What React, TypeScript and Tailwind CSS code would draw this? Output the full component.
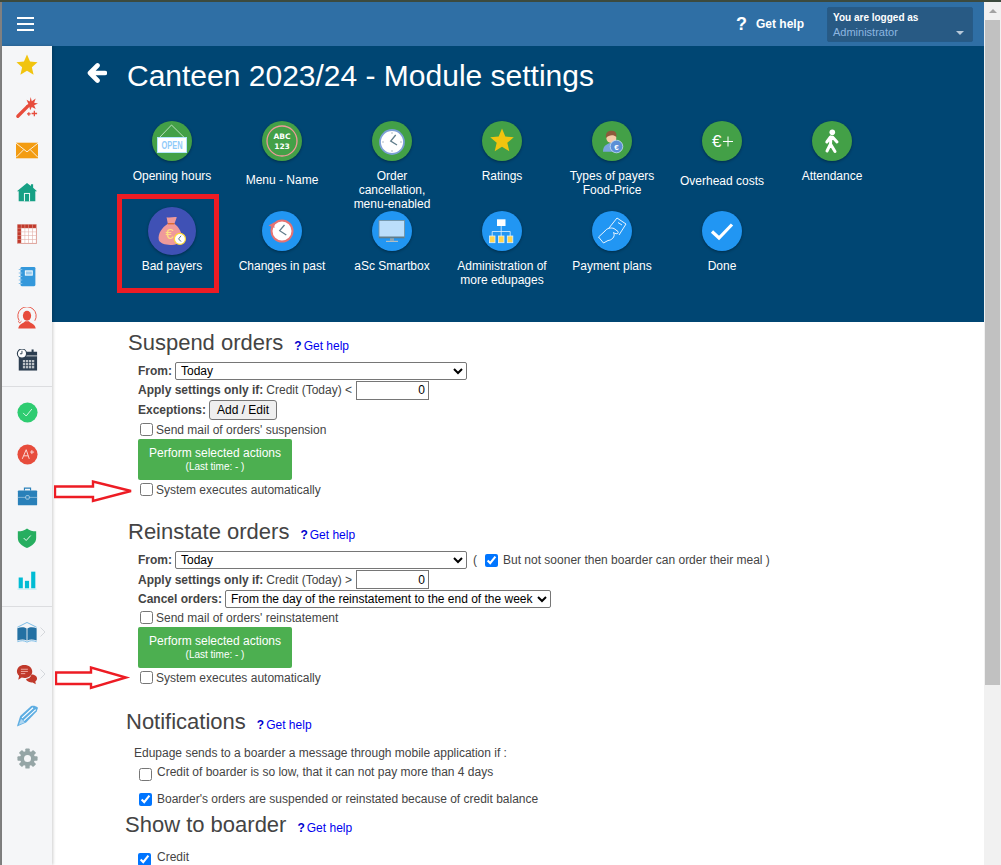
import React from 'react';

const Star = () => (
  <svg viewBox="0 0 24 24" className="w-[24px] h-[22px] -mt-[2px]"><polygon points="12,0.5 15.3,8.2 23.5,8.9 17.3,14.4 19.2,22.5 12,18.2 4.8,22.5 6.7,14.4 0.5,8.9 8.7,8.2" fill="#f1c40f" /></svg>
);
const Wand = () => (
  <svg viewBox="0 0 24 24" className="w-[24px] h-[22px]">
    <path d="M2 21 L13 10" stroke="#e74c3c" strokeWidth="3.6" strokeLinecap="round" />
    <polygon points="16,0 17.2,4.500 21.500,1.500 19.800,6.200 24,7.200 19.800,9 21.500,13 17.200,11 15.500,14.500 14.500,10.500 10.500,10 13.500,7.500 11.500,3 15,5" fill="#e74c3c" />
    <path d="M20 15v6M17 18h6M14 16.500v4M12 18.500h4" stroke="#e74c3c" strokeWidth="1.400" />
  </svg>
);
const Mail = () => (
  <svg viewBox="0 0 24 18" className="w-[22px] h-[17px]">
    <rect width="24" height="17" y="0.5" fill="#f39c12" />
    <path d="M0 1 L12 10.500 L24 1 M0 16.500 L8.500 8 M24 16.500 L15.500 8" stroke="#fff" strokeWidth="0.9" fill="none" />
  </svg>
);
const Home = () => (
  <svg viewBox="0 0 24 24" className="w-[22px] h-[21px]">
    <path d="M12 1 L16.500 4.500 V2.500 H19 V6.500 L23.500 10.500 H21.500 V22 H2.500 V10.500 H0.500 Z" fill="#16a085" />
    <path d="M8.500 22 V12.500 H15.500 V22" fill="#e8f6f3" />
    <rect x="9.700" y="13.700" width="4.600" height="8.300" fill="#16a085" />
  </svg>
);
const Timetable = () => {
  const cells: React.ReactNode[] = [];
  for (let r = 0; r < 5; r++) {
    for (let c = 0; c < 5; c++) {
      const dark = r === 0 || c === 0;
      cells.push(<rect key={`${r}-${c}`} x={0.800 + c * 4.500} y={0.800 + r * 4.500} width="3.900" height="3.900" fill={dark ? '#c0392b' : '#fff'} />);
    }
  }
  return (
    <svg viewBox="0 0 24 24" className="w-[20px] h-[20px]"><rect width="24" height="24" fill="#e0a9a2" rx="1" />{cells}</svg>
  );
};
const Notebook = () => (
  <svg viewBox="0 0 24 24" className="w-[21px] h-[21px]">
    <rect x="4" y="1" width="17" height="22" rx="1.500" fill="#3498db" />
    <rect x="9" y="5" width="9" height="6" fill="#fff" />
    <path d="M10 7h7M10 9h7" stroke="#3498db" strokeWidth="0.9" />
    <path d="M2 4h4M2 8h4M2 12h4M2 16h4M2 20h4" stroke="#85c1e9" strokeWidth="1.200" />
  </svg>
);
const UserIcon = () => (
  <svg viewBox="0 0 24 24" className="w-[22px] h-[22px]">
    <path d="M3.500 15 A10 10 0 1 1 20.500 15" stroke="#e74c3c" strokeWidth="1" fill="none" />
    <ellipse cx="12" cy="9.500" rx="4.500" ry="5.500" fill="#e74c3c" />
    <path d="M2.500 23.500 C3 18 8 18 10 15.500 H14 C16 18 21 18 21.500 23.500 Z" fill="#e74c3c" />
    <path d="M2.500 15.500 L4 17.500 L6 15.500" stroke="#e74c3c" strokeWidth="1" fill="none" />
  </svg>
);
const CalClock = () => {
  const dots: React.ReactNode[] = [];
  for (let r = 0; r < 3; r++) {
    for (let c = 0; c < 4; c++) {
      dots.push(<rect key={`${r}-${c}`} x={7.500 + c * 3.300} y={12 + r * 3.300} width="2.500" height="2.500" fill="#bdc3c7" />);
    }
  }
  return (
    <svg viewBox="0 0 24 24" className="w-[22px] h-[22px]">
      <rect x="3" y="3" width="20" height="20.500" fill="#2c3e50" />
      <rect x="17" y="0.500" width="2.200" height="4" fill="#2c3e50" />
      <path d="M3 7.500h20" stroke="#fff" strokeWidth="0.800" />
      {dots}
      <circle cx="6.500" cy="5" r="5" fill="#fff" stroke="#2c3e50" strokeWidth="1.200" />
      <path d="M6.500 2v3.200h-2.200" stroke="#2c3e50" strokeWidth="1" fill="none" />
    </svg>
  );
};
const CheckBadge = () => (
  <svg viewBox="0 0 24 24" className="w-[21px] h-[21px]">
    <circle cx="12" cy="12" r="11.500" fill="#2ecc71" />
    <path d="M7 12.500 L10.500 16 L17 8" stroke="#e8fbf0" strokeWidth="1" fill="none" />
  </svg>
);
const Grade = () => (
  <svg viewBox="0 0 24 24" className="w-[21px] h-[21px]">
    <circle cx="12" cy="12" r="11.500" fill="#e74c3c" />
    <path d="M6 17 L10.500 6.500 L14 17 M7.800 13.500 H12.800" stroke="#fadbd8" strokeWidth="1.100" fill="none" />
    <path d="M17 7v4.500M15 9.200h4.500" stroke="#fadbd8" strokeWidth="1.100" />
  </svg>
);
const Briefcase = () => (
  <svg viewBox="0 0 24 24" className="w-[21px] h-[21px]">
    <path d="M8.500 5 V2.500 H15.500 V5" stroke="#2980b9" strokeWidth="1.300" fill="none" />
    <rect x="1" y="5" width="22" height="17" rx="1" fill="#2980b9" />
    <path d="M1 13h22" stroke="#a9cce3" strokeWidth="0.800" />
    <rect x="10" y="11" width="4" height="4" rx="1" fill="#2980b9" stroke="#d4e6f1" strokeWidth="0.800" />
  </svg>
);
const Shield = () => (
  <svg viewBox="0 0 24 24" className="w-[20px] h-[22px]">
    <path d="M12 0.500 C15 3 18.500 4 23 4 V12 C23 18 18 21.500 12 24 C6 21.500 1 18 1 12 V4 C5.500 4 9 3 12 0.500 Z" fill="#27ae60" />
    <path d="M8 12 L11 15 L16.500 9" stroke="#e9f7ef" strokeWidth="1.200" fill="none" />
  </svg>
);
const Bars = () => (
  <svg viewBox="0 0 24 24" className="w-[20px] h-[20px]">
    <rect x="2" y="9" width="5" height="13" fill="#00bcd4" />
    <rect x="9.500" y="13" width="5" height="9" fill="#00bcd4" />
    <rect x="17" y="2" width="5" height="20" fill="#00bcd4" />
    <path d="M0.500 23h23" stroke="#b2ebf2" strokeWidth="1" />
  </svg>
);
const Book = () => (
  <svg viewBox="0 0 24 24" className="w-[22px] h-[21px]">
    <path d="M1 6 L12 0.500 L23 6" stroke="#5dade2" strokeWidth="0.900" fill="none" />
    <path d="M1 7 C5 5.500 9 5.500 11.500 7.500 V21 C9 19.500 5 19.500 1 21 Z" fill="#2471a3" />
    <path d="M23 7 C19 5.500 15 5.500 12.500 7.500 V21 C15 19.500 19 19.500 23 21 Z" fill="#2471a3" />
    <path d="M1 22.500 C5 21 9 21 12 23 C15 21 19 21 23 22.500" stroke="#5dade2" strokeWidth="0.900" fill="none" />
  </svg>
);
const Chevron = () => (
  <svg viewBox="0 0 6 10" className="w-[6px] h-[10px] absolute left-[38px] top-[6px]"><path d="M0.500 0.500 L5 5 L0.500 9.500" stroke="#d5d8dc" strokeWidth="1" fill="none" /></svg>
);
const Chat = () => (
  <svg viewBox="0 0 24 24" className="w-[22px] h-[21px]">
    <path d="M9 1 C14 1 18 4 18 8.500 C18 13 14 16 9 16 C8 16 7 15.800 6 15.500 L2 18 L3 13.500 C1.500 12 0.500 10.500 0.500 8.500 C0.500 4 4 1 9 1 Z" fill="#c0392b" />
    <path d="M5 6h8M5 8.500h8M5 11h5" stroke="#f5b7b1" strokeWidth="1" />
    <path d="M17 12 C21 12 23.500 14 23.500 16.500 C23.500 18 22.500 19 21.500 20 L22 23 L18.500 21 C15 21 11 19.500 11 17 C14 17 16.500 15 17 12 Z" fill="#c0392b" />
  </svg>
);
const Pencil = () => (
  <svg viewBox="0 0 24 24" className="w-[23px] h-[22px]">
    <path d="M0.500 23.500 L4 12 L16 1 C19 0.500 21 1 23.500 3 L22 7 L10.500 19 Z" fill="#5dade2" />
    <path d="M6 14 L18 3 M8 17 L21 5" stroke="#fff" strokeWidth="1.200" />
    <path d="M2.500 21.500 L5 15 L9 19 Z" fill="#fff" opacity="0.500" />
  </svg>
);
const Gear = () => (
  <svg viewBox="0 0 24 24" className="w-[21px] h-[21px]">
    <g fill="#95a5a6">
      <circle cx="12" cy="12" r="8.500" />
      <rect x="9.500" y="0.500" width="5" height="23" rx="1" />
      <rect x="9.500" y="0.500" width="5" height="23" rx="1" transform="rotate(45 12 12)" />
      <rect x="9.500" y="0.500" width="5" height="23" rx="1" transform="rotate(90 12 12)" />
      <rect x="9.500" y="0.500" width="5" height="23" rx="1" transform="rotate(135 12 12)" />
    </g>
    <circle cx="12" cy="12" r="4" fill="#f5f6f8" />
  </svg>
);

const SideIcon = ({ children, more }: { children: React.ReactNode; more?: boolean }) => (
  <div className="relative h-[22px] w-full flex items-center justify-center">
    {children}
    {more && <Chevron />}
  </div>
);

const circleIcons: Record<string, React.ReactNode> = {
  open: (
    <>
      <path d="M7.700 16.300 L19.500 4 L32 16.300" stroke="#c8e6c9" strokeWidth="0.900" fill="none" />
      <rect x="5.500" y="16.500" width="29" height="15" fill="#fff" stroke="#b3e5fc" strokeWidth="1" />
      <text x="20" y="28" textAnchor="middle" fontSize="10" fontWeight="700" fill="#90caf9" textLength="21" lengthAdjust="spacingAndGlyphs" fontFamily="'Liberation Sans', sans-serif">OPEN</text>
    </>
  ),
  menu: (
    <>
      <circle cx="20" cy="20" r="15" fill="#43a047" stroke="#ef9a9a" strokeWidth="1.300" />
      <text x="20" y="18" textAnchor="middle" fontSize="7.500" fontWeight="700" fill="#fff" fontFamily="'DejaVu Sans', sans-serif">ABC</text>
      <text x="20" y="28" textAnchor="middle" fontSize="7.500" fontWeight="700" fill="#fff" fontFamily="'DejaVu Sans', sans-serif">123</text>
    </>
  ),
  clock: (
    <>
      <circle cx="20" cy="21" r="12" fill="#fff" stroke="#7c9fd6" strokeWidth="1.800" />
      <path d="M20 11v2M20 29v2M10 21h2M28 21h2" stroke="#b0bec5" strokeWidth="1" />
      <path d="M23.700 14 L18.700 20 L25 24" stroke="#607d8b" strokeWidth="1.300" fill="none" />
    </>
  ),
  star: <polygon points="20,7.500 23.300,15.500 31.800,16.200 25.300,21.800 27.300,30.300 20,25.800 12.700,30.300 14.700,21.800 8.200,16.200 16.700,15.500" fill="#f1c40f" />,
  payer: (
    <>
      <path d="M11 30.700 C11 25 14 23.500 18 22 L24 24 L24 30.700 Z" fill="#7aa5dc" />
      <circle cx="19.300" cy="17" r="5" fill="#f5cba7" />
      <path d="M14 17 C13 11 17 9.500 20 9.700 C24 9.700 25 13 24.300 16 C22 13.500 17 13.500 14 17 Z" fill="#8d5a3b" />
      <circle cx="24.500" cy="25.500" r="6.300" fill="#5c8fd6" stroke="#c5dcf5" strokeWidth="0.800" />
      <text x="24.500" y="28.500" textAnchor="middle" fontSize="8" fontWeight="700" fill="#fff" fontFamily="'Liberation Sans', sans-serif">€</text>
    </>
  ),
  overhead: (
    <>
      <text x="10" y="26" fontSize="17" fill="#fff" fontFamily="'Liberation Sans', sans-serif">€</text>
      <path d="M21 20.500h10M26 15.500v10" stroke="#fff" strokeWidth="1" />
    </>
  ),
  walk: (
    <>
      <circle cx="20.300" cy="11.300" r="2.800" fill="#fff" />
      <path d="M18.500 16 L14.800 21 M20.500 16 L25 21 M19 16 L18.500 23 L15 30 M18.500 23 L23 30.500" stroke="#fff" strokeWidth="3" strokeLinecap="round" fill="none" />
    </>
  ),
  bad: (
    <>
      <path d="M15.500 8.500 C18 9.500 21 8 24 8.500 L22 14 C26 17 29 22 28 27 C27 33 11 33 9 27.500 C8 22 12 17 16.500 14 Z" fill="#ef9a9a" />
      <path d="M16.500 14 H22" stroke="#d35400" strokeWidth="0.800" />
      <text x="18" y="27" textAnchor="middle" fontSize="12" fill="#ffe082" fontFamily="'Liberation Sans', sans-serif">€</text>
      <circle cx="26.600" cy="26.600" r="4.600" fill="#fff" stroke="#fdd835" strokeWidth="1" />
      <path d="M27.500 24 L25.500 26.600 L27.500 28.800" stroke="#546e7a" strokeWidth="0.800" fill="none" />
    </>
  ),
  past: (
    <>
      <circle cx="20" cy="20" r="10.500" fill="#fff" stroke="#e57373" strokeWidth="2" />
      <path d="M6.500 14.500 L12 11.500 L12.500 17 Z" fill="#e57373" />
      <path d="M22.500 14 L17.700 19.700 L24.300 24" stroke="#607d8b" strokeWidth="1.300" fill="none" />
    </>
  ),
  box: (
    <>
      <rect x="7" y="9.500" width="25.500" height="17" fill="#bbdefb" stroke="#78909c" strokeWidth="0.800" />
      <rect x="7" y="25.500" width="25.500" height="1.800" fill="#607d8b" />
      <rect x="18" y="27.300" width="4" height="2.500" fill="#90a4ae" />
      <rect x="14" y="29.800" width="12" height="1.200" fill="#b0bec5" />
    </>
  ),
  admin: (
    <>
      <rect x="15" y="8.300" width="8.500" height="6.700" fill="#fff" />
      <path d="M19.200 15v5.500M10.200 25v-4.500h18v4.500M19.200 20.500v4.500" stroke="#e3f2fd" strokeWidth="0.800" fill="none" />
      <rect x="7.500" y="25" width="5.500" height="6.700" fill="#ffd54f" stroke="#e3f2fd" strokeWidth="0.800" />
      <rect x="16.500" y="25" width="5.500" height="6.700" fill="#ffd54f" stroke="#e3f2fd" strokeWidth="0.800" />
      <rect x="25.300" y="25" width="5.500" height="6.700" fill="#ffd54f" stroke="#e3f2fd" strokeWidth="0.800" />
    </>
  ),
  plans: (
    <g stroke="#fff" strokeWidth="0.900" fill="none">
      <path d="M17 17 L25 7 L34 13 L27 24" />
      <path d="M26 11.500 L30 14" />
      <path d="M6.500 26 L13 20 C15 17 19 16.500 22 17.500 L26 20.500 C27 23 24 23.500 21.500 21.500 C24 26 19 29.500 16 29.500 L11.500 32 Z" />
    </g>
  ),
  done: <path d="M10 20.500 L17 27 L30 13.500" stroke="#fff" strokeWidth="3.200" fill="none" />,
};

type Tile = { label: string; icon: string; tone: string; top?: string; big?: boolean };

const tiles: Tile[] = [
  { label: 'Opening hours', icon: 'open', tone: 'bg-[#43a047]' },
  { label: 'Menu - Name', icon: 'menu', tone: 'bg-[#43a047]', top: 'mt-[12px]' },
  { label: 'Order cancellation, menu-enabled', icon: 'clock', tone: 'bg-[#43a047]' },
  { label: 'Ratings', icon: 'star', tone: 'bg-[#43a047]' },
  { label: 'Types of payers Food-Price', icon: 'payer', tone: 'bg-[#43a047]' },
  { label: 'Overhead costs', icon: 'overhead', tone: 'bg-[#43a047]', top: 'mt-[13px]' },
  { label: 'Attendance', icon: 'walk', tone: 'bg-[#43a047]' },
  { label: 'Bad payers', icon: 'bad', tone: 'bg-[#3f51b5]', big: true },
  { label: 'Changes in past', icon: 'past', tone: 'bg-[#2196f3]' },
  { label: 'aSc Smartbox', icon: 'box', tone: 'bg-[#2196f3]' },
  { label: 'Administration of more edupages', icon: 'admin', tone: 'bg-[#2196f3]' },
  { label: 'Payment plans', icon: 'plans', tone: 'bg-[#2196f3]' },
  { label: 'Done', icon: 'done', tone: 'bg-[#2196f3]' },
];

const ModuleTile = ({ tile }: { tile: Tile }) => (
  <div className="relative flex flex-col items-center h-[90px]">
    {tile.big && <div className="absolute left-0 top-[-17px] w-[102px] h-[99px] border-[5px] border-[#ed1c24]" />}
    <div
      className={`${tile.big ? 'w-[48px] h-[48px] -my-[4px]' : 'w-[40px] h-[40px]'} ${tile.tone} rounded-full shadow-[0_1px_3px_rgba(0,0,0,0.35)] shrink-0 relative`}
    >
      <svg viewBox="0 0 40 40" className="w-full h-full">{circleIcons[tile.icon]}</svg>
    </div>
    <div className={`${tile.top ?? 'mt-[8px]'} w-[100px] text-center text-[12px] leading-[14px] text-white`}>{tile.label}</div>
  </div>
);

const Help = ({ className }: { className: string }) => (
  <span className={`text-[12px] text-[#0000ee] mt-[6px] ${className}`}>
    <b className="text-[#0000cc] mr-[2px]">?</b>Get help
  </span>
);

const Heading = ({ title, help, className }: { title: string; help: string; className: string }) => (
  <div className={`flex items-center text-[22px] leading-[26px] text-[#444] ${className}`}>
    {title}
    <Help className={help} />
  </div>
);

const Check = ({ label, checked }: { label: string; checked?: boolean }) => (
  <label className="flex items-center h-[19px]">
    <input type="checkbox" defaultChecked={checked} className="w-[13px] h-[13px] ml-[2px] mr-[3px] appearance-auto" />
    {label}
  </label>
);

const PerformButton = () => (
  <button className="block w-[154px] h-[41px] bg-[#4caf50] rounded-[2px] text-white text-center">
    <div className="text-[12px] leading-[14px]">Perform selected actions</div>
    <div className="text-[10px] leading-[12px] mt-[1px]">(Last time: - )</div>
  </button>
);

const RedArrow = ({ d, className }: { d: string; className: string }) => (
  <svg viewBox="0 0 80 26" className={`absolute w-[80px] h-[26px] ${className}`}>
    <path d={d} fill="#fff" stroke="#ed1c24" strokeWidth="2.400" />
  </svg>
);

const NativeSelect = ({ value, className }: { value: string; className: string }) => (
  <select defaultValue={value} className={`appearance-auto bg-white border border-[#767676] rounded-[2px] text-[12px] text-black pl-[1px] ${className}`}>
    <option>{value}</option>
  </select>
);

const NumberBox = () => (
  <input
    type="text"
    defaultValue="0"
    className="w-[73px] h-[19px] ml-[4px] border border-[#767676] text-right text-[12px] text-black pr-[3px] bg-white"
  />
);

export default function App() {
  return (
    <div className="h-[865px] w-[1001px] overflow-hidden flex flex-col bg-white text-[#444] text-[12px] font-['Liberation_Sans',Arial,sans-serif]">
      <div className="h-[2px] shrink-0 bg-[#3c4a3e]" />
      <div className="flex flex-1 min-h-0">
        <div className="w-[2px] shrink-0 bg-[#808080]" />
        <div className="flex-1 min-w-0 flex flex-col">
          {/* top bar */}
          <header className="h-[44px] shrink-0 bg-[#2f6fa5] flex items-center pl-[15px] pr-[11px] text-white">
            <div className="flex flex-col gap-[4px]">
              <span className="block w-[17px] h-[2px] bg-white" />
              <span className="block w-[17px] h-[2px] bg-white" />
              <span className="block w-[17px] h-[2px] bg-white" />
            </div>
            <span className="ml-auto text-[18px] font-bold mr-[9px]">?</span>
            <span className="font-bold text-[12px] mr-[23px]">Get help</span>
            <div className="w-[146px] h-[35px] mt-[1px] bg-[#285a84] border border-[#265b88] rounded-[2px] pl-[5px] relative">
              <div className="text-[10px] leading-[14px] font-bold mt-[3px]">You are logged as</div>
              <div className="text-[11px] leading-[14px] text-[#8db6e0]">Administrator</div>
              <span className="absolute right-[8px] top-[23px] w-0 h-0 border-x-[4px] border-x-transparent border-t-[4px] border-t-[#b8c9da]" />
            </div>
          </header>

          <div className="flex flex-1 min-h-0">
            {/* sidebar */}
            <aside className="w-[50px] shrink-0 bg-[#f5f6f8] shadow-[1px_0_3px_rgba(0,0,0,0.2)] relative flex flex-col">
              <div className="pt-[9px] flex flex-col gap-[20px]">
                <SideIcon><Star /></SideIcon>
                <SideIcon><Wand /></SideIcon>
                <SideIcon><Mail /></SideIcon>
                <SideIcon><Home /></SideIcon>
                <SideIcon><Timetable /></SideIcon>
                <SideIcon><Notebook /></SideIcon>
                <SideIcon><UserIcon /></SideIcon>
                <SideIcon><CalClock /></SideIcon>
              </div>
              <div className="mt-[15px] border-t border-[#dcdde0] pt-[14px] flex flex-col gap-[20px]">
                <SideIcon><CheckBadge /></SideIcon>
                <SideIcon><Grade /></SideIcon>
                <SideIcon><Briefcase /></SideIcon>
                <SideIcon><Shield /></SideIcon>
                <SideIcon><Bars /></SideIcon>
              </div>
              <div className="mt-[15px] border-t border-[#dcdde0] pt-[14px] flex flex-col gap-[20px]">
                <SideIcon more><Book /></SideIcon>
                <SideIcon more><Chat /></SideIcon>
                <SideIcon><Pencil /></SideIcon>
                <SideIcon><Gear /></SideIcon>
              </div>
            </aside>

            <main className="flex-1 min-w-0 flex flex-col">
              <section className="h-[276px] shrink-0 bg-[#004673] pt-[13px]">
                <div className="flex items-center h-[34px] pl-[35px]">
                  <svg viewBox="0 0 20 20" className="w-[20px] h-[20px] mt-[-6px] mr-[20px]">
                    <path d="M18 10 H5 M10.500 2.500 L3 10 L10.500 17.500" stroke="#fff" strokeWidth="4.600" strokeLinecap="round" strokeLinejoin="round" fill="none" />
                  </svg>
                  <h1 className="text-[30px] leading-[34px] text-white">Canteen 2023/24 - Module settings</h1>
                </div>
                <div className="grid grid-cols-[repeat(7,110px)] ml-[65px] mt-[28px]">
                  {tiles.map((t) => <ModuleTile key={t.label} tile={t} />)}
                </div>
              </section>

              <section className="relative pl-[86px]">
                <Heading title="Suspend orders" help="ml-[11px]" className="-ml-[10px] h-[40px] pt-[2px]" />
                <div className="flex items-center h-[18px] font-bold">
                  From:<NativeSelect value="Today" className="ml-[3px] w-[292px] h-[18px] font-normal" />
                </div>
                <div className="flex items-center h-[20px]">
                  <b className="mr-[3px]">Apply settings only if:</b>Credit (Today) &lt;<NumberBox />
                </div>
                <div className="flex items-center h-[20px] font-bold">
                  Exceptions:
                  <button className="ml-[3px] w-[68px] h-[20px] bg-[#efefef] border border-[#767676] rounded-[3px] font-normal text-black">Add / Edit</button>
                </div>
                <Check label="Send mail of orders' suspension" />
                <PerformButton />
                <div className="relative">
                  <RedArrow d="M1 6.500 H39 V1.500 L77 11 L39 21 V17 H1 Z" className="left-[-84px] top-0" />
                  <Check label="System executes automatically" />
                </div>

                <Heading title="Reinstate orders" help="ml-[11px]" className="-ml-[10px] h-[52px] pt-[14px]" />
                <div className="flex items-center h-[18px] font-bold">
                  From:<NativeSelect value="Today" className="ml-[3px] w-[292px] h-[18px] font-normal" />
                  <span className="font-normal ml-[6px]">(</span>
                  <input type="checkbox" defaultChecked className="w-[13px] h-[13px] ml-[8px] mr-[5px] appearance-auto" />
                  <span className="font-normal">But not sooner then boarder can order their meal )</span>
                </div>
                <div className="flex items-center h-[21px]">
                  <b className="mr-[3px]">Apply settings only if:</b>Credit (Today) &gt;<NumberBox />
                </div>
                <div className="flex items-center h-[18px] font-bold">
                  Cancel orders:
                  <NativeSelect value="From the day of the reinstatement to the end of the week" className="ml-[3px] w-[326px] h-[18px] font-normal" />
                </div>
                <Check label="Send mail of orders' reinstatement" />
                <PerformButton />
                <div className="relative">
                  <RedArrow d="M1 6.500 H36 V1.500 L71 11.500 L36 22 V18 H1 Z" className="left-[-83px] top-[-2px]" />
                  <Check label="System executes automatically" />
                </div>

                <Heading title="Notifications" help="ml-[11px]" className="-ml-[12px] h-[34px] mt-[17px] pt-[2px]" />
                <div className="ml-[-4px] h-[16px] mt-[7px] leading-[16px]">Edupage sends to a boarder a message through mobile application if :</div>
                <div className="flex items-start h-[27px] mt-[4px] ml-[1px]">
                  <input type="checkbox" className="w-[13px] h-[13px] mt-[3px] mr-[5px] appearance-auto" />
                  <span className="leading-[14px]">Credit of boarder is so low, that it can not pay more than 4 days</span>
                </div>
                <div className="flex items-center h-[14px] ml-[1px]">
                  <input type="checkbox" defaultChecked className="w-[13px] h-[13px] mr-[5px] appearance-auto" />
                  Boarder's orders are suspended or reinstated because of credit balance
                </div>
                <Heading title="Show to boarder" help="ml-[11px]" className="-ml-[13px] h-[26px] mt-[5px] pt-[2px]" />
                <div className="flex items-start h-[20px] mt-[13px]">
                  <input type="checkbox" defaultChecked className="w-[13px] h-[13px] mt-[3px] mr-[6px] appearance-auto" />
                  <span className="leading-[14px]">Credit</span>
                </div>
              </section>
            </main>
          </div>
        </div>
        {/* scrollbar */}
        <div className="w-[17px] shrink-0 bg-[#f1f1f1] flex flex-col items-center">
          <div className="h-[17px] flex items-center justify-center">
            <span className="w-0 h-0 border-x-[4px] border-x-transparent border-b-[4px] border-b-[#a3a3a3]" />
          </div>
          <div className="w-[15px] h-[665px] bg-[#c1c1c1] mt-[1px]" />
        </div>
      </div>
    </div>
  );
}
